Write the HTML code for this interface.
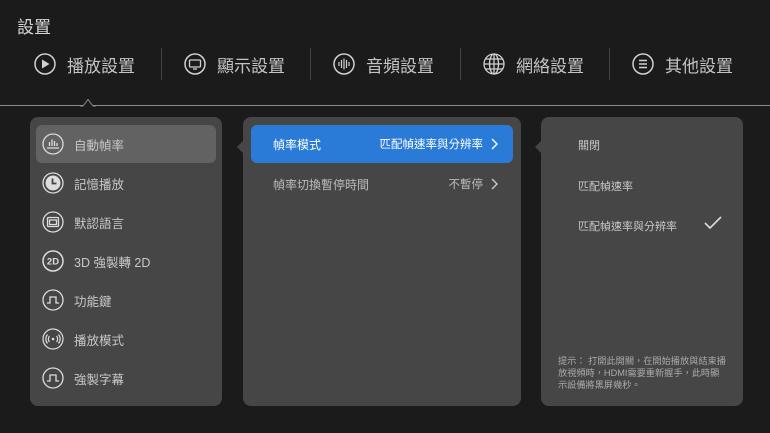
<!DOCTYPE html>
<html><head><meta charset="utf-8"><style>
*{margin:0;padding:0;box-sizing:border-box}
body{width:770px;height:433px;background:#1b1b1c;font-family:"Liberation Sans","Noto Sans CJK TC",sans-serif;position:relative;overflow:hidden;color:#ccc}
.abs{position:absolute}
.title{left:17px;top:13px;font-size:17px;color:#d8d8d8}
.tab{top:52px;font-size:17px;color:#c4c4c4;display:flex;align-items:center;height:24px}
.tab svg{margin-right:11px}
.sep{top:48px;width:1px;height:32px;background:#444}
.line{left:0;top:105px;width:770px;height:1px;background:#8a8a8a}
.panel{background:#464646;border-radius:8px;top:117px;height:289px}
.item{position:absolute;left:6px;width:180px;height:38px;display:flex;align-items:center;font-size:12.5px;color:#c8c8c8}
.item svg{margin:0 10px 0 6px}
.row{position:absolute;left:8px;width:262px;height:38px;border-radius:6px;font-size:12px;display:flex;align-items:center;padding-left:22px;padding-right:12px}
.row .v{margin-left:auto;display:flex;align-items:center;font-size:11.5px}
.opt{position:absolute;left:37px;font-size:11px;color:#c8c8c8}
</style></head><body>
<div class="abs title">設置</div>

<div class="abs tab" style="left:34px"><svg width="22" height="22" viewBox="0 0 22 22"><circle cx="11" cy="11" r="10" fill="none" stroke="#d0d0d0" stroke-width="1.5"/><path d="M8 6.5v9l7.5-4.5z" fill="#d0d0d0"/></svg>播放設置</div>
<div class="abs sep" style="left:161px"></div>
<div class="abs tab" style="left:184px"><svg width="22" height="22" viewBox="0 0 22 22"><circle cx="11" cy="11" r="10" fill="none" stroke="#d0d0d0" stroke-width="1.5"/><rect x="5.5" y="7" width="11" height="7" rx="1" fill="none" stroke="#d0d0d0" stroke-width="1.3"/><path d="M9 16h4" stroke="#d0d0d0" stroke-width="1.3"/></svg>顯示設置</div>
<div class="abs sep" style="left:310px"></div>
<div class="abs tab" style="left:333px"><svg width="22" height="22" viewBox="0 0 22 22"><circle cx="11" cy="11" r="10" fill="none" stroke="#d0d0d0" stroke-width="1.5"/><path d="M6 9v4M8.5 7v8M11 5.5v11M13.5 7v8M16 9v4" stroke="#d0d0d0" stroke-width="1.2"/></svg>音頻設置</div>
<div class="abs sep" style="left:460px"></div>
<div class="abs tab" style="left:483px"><svg width="22" height="22" viewBox="0 0 22 22"><g fill="none" stroke="#d0d0d0" stroke-width="1.3"><circle cx="11" cy="11" r="10"/><ellipse cx="11" cy="11" rx="4.5" ry="10"/><path d="M11 1v20M1 11h20M2.5 6h17M2.5 16h17"/></g></svg>網絡設置</div>
<div class="abs sep" style="left:609px"></div>
<div class="abs tab" style="left:632px"><svg width="22" height="22" viewBox="0 0 22 22"><circle cx="11" cy="11" r="10" fill="none" stroke="#d0d0d0" stroke-width="1.5"/><path d="M7 7.5h8M7 11h8M7 14.5h8" stroke="#d0d0d0" stroke-width="1.5"/></svg>其他設置</div>

<div class="abs line"></div>
<svg class="abs" style="left:80px;top:98px" width="16" height="9" viewBox="0 0 16 9"><path d="M0 8H3L8 1.5L13 8H16" fill="#1b1b1c" stroke="#8a8a8a" stroke-width="1"/></svg>

<div class="abs panel" style="left:30px;width:192px">
 <div class="item" style="top:8px;background:#626262;border-radius:6px;width:180px"><svg width="22" height="22" viewBox="0 0 22 22"><g fill="none" stroke="#ddd" stroke-width="1.3"><circle cx="11" cy="11" r="10"/><path d="M5 15h12M7.5 13V9M10 13V6.5M12.5 13V8M15 13V10"/></g></svg>自動幀率</div>
 <div class="item" style="top:47px"><svg width="22" height="22" viewBox="0 0 22 22"><circle cx="11" cy="11" r="10" fill="none" stroke="#ddd" stroke-width="1.3"/><circle cx="11" cy="11" r="7.5" fill="#ddd"/><path d="M10.5 6.5v5h4" stroke="#464646" stroke-width="1.8" fill="none"/></svg>記憶播放</div>
 <div class="item" style="top:86px"><svg width="22" height="22" viewBox="0 0 22 22"><g fill="none" stroke="#ddd" stroke-width="1.3"><circle cx="11" cy="11" r="10"/><rect x="5.5" y="6.5" width="11" height="9" rx="1"/><rect x="7.5" y="9" width="7" height="4.5"/></g></svg>默認語言</div>
 <div class="item" style="top:125px"><svg width="22" height="22" viewBox="0 0 22 22"><circle cx="11" cy="11" r="10" fill="none" stroke="#ddd" stroke-width="1.5"/><text x="11" y="14.5" font-size="9.5" font-weight="bold" fill="#ddd" text-anchor="middle" font-family="Liberation Sans">2D</text></svg>3D 強製轉 2D</div>
 <div class="item" style="top:164px"><svg width="22" height="22" viewBox="0 0 22 22"><g fill="none" stroke="#ddd" stroke-width="1.3"><circle cx="11" cy="11" r="10"/><path d="M5 14h3V8h6v6h3"/></g></svg>功能鍵</div>
 <div class="item" style="top:203px"><svg width="22" height="22" viewBox="0 0 22 22"><g fill="none" stroke="#ddd" stroke-width="1.2"><circle cx="11" cy="11" r="10"/><path d="M7.5 8a4.5 4.5 0 0 0 0 6M14.5 8a4.5 4.5 0 0 1 0 6M5.5 6.5a7 7 0 0 0 0 9M16.5 6.5a7 7 0 0 1 0 9"/></g><circle cx="11" cy="11" r="1.3" fill="#ddd"/></svg>播放模式</div>
 <div class="item" style="top:242px"><svg width="22" height="22" viewBox="0 0 22 22"><g fill="none" stroke="#ddd" stroke-width="1.3"><circle cx="11" cy="11" r="10"/><path d="M5 14h3V8h6v6h3"/></g></svg>強製字幕</div>
</div>

<svg class="abs" style="left:236px;top:141px" width="8" height="12" viewBox="0 0 8 12"><path d="M7 0L1 6L7 12z" fill="#464646"/></svg>
<div class="abs panel" style="left:243px;width:278px">
 <div class="row" style="top:8px;background:#2a7bd8;color:#fff">幀率模式<span class="v">匹配幀速率與分辨率<svg width="14" height="14" viewBox="0 0 14 14" style="margin-left:4px"><path d="M5 2l5 5-5 5" fill="none" stroke="#fff" stroke-width="1.4"/></svg></span></div>
 <div class="row" style="top:48px;color:#bbb">幀率切換暫停時間<span class="v">不暫停<svg width="14" height="14" viewBox="0 0 14 14" style="margin-left:4px"><path d="M5 2l5 5-5 5" fill="none" stroke="#ccc" stroke-width="1.4"/></svg></span></div>
</div>

<svg class="abs" style="left:534px;top:141px" width="8" height="12" viewBox="0 0 8 12"><path d="M7 0L1 6L7 12z" fill="#464646"/></svg>
<div class="abs panel" style="left:541px;width:202px">
 <div class="opt" style="top:20px">關閉</div>
 <div class="opt" style="top:61px">匹配幀速率</div>
 <div class="opt" style="top:101px">匹配幀速率與分辨率</div>
 <svg class="abs" style="left:163px;top:99px" width="18" height="14" viewBox="0 0 18 14"><path d="M1 7l5 5L17 1" fill="none" stroke="#ddd" stroke-width="1.6"/></svg>
 <div class="abs" style="left:17px;top:238px;white-space:nowrap;font-size:9.2px;line-height:12px;color:#aaa">提示： 打開此開關，在開始播放與結束播<br>放視頻時，HDMI需要重新握手，此時顯<br>示設備將黑屏幾秒。</div>
</div>
</body></html>
